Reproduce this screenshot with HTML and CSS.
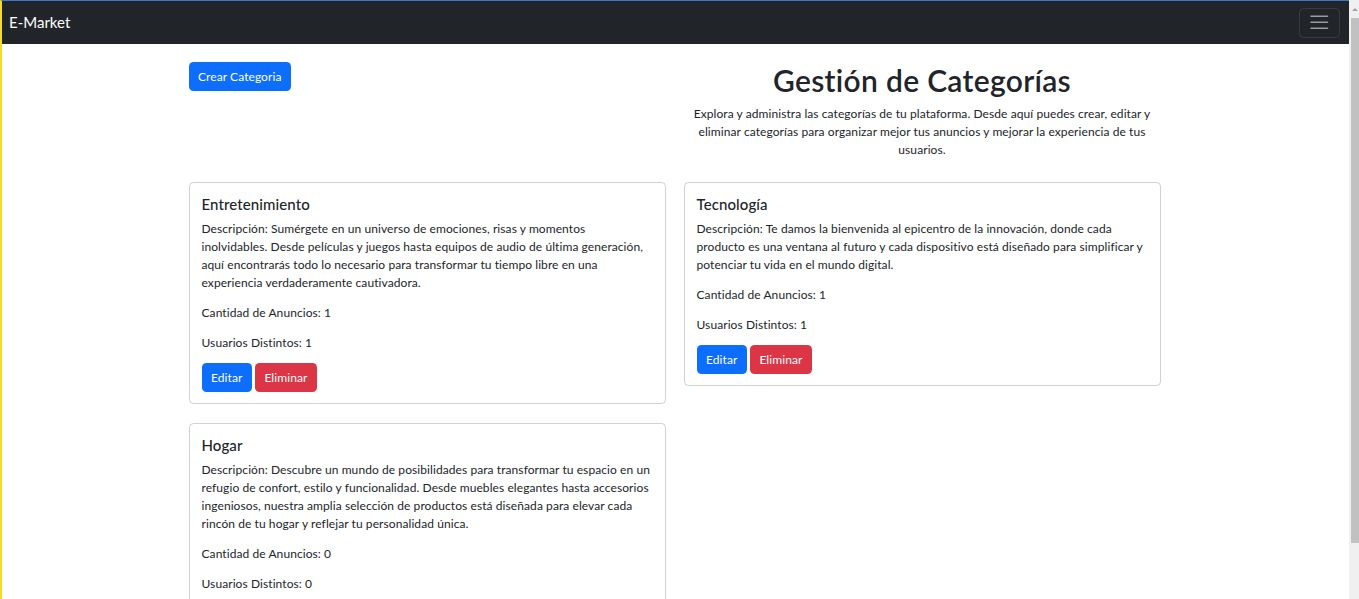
FILE: index.html
```html
<!DOCTYPE html>
<html lang="es">
<head>
<meta charset="utf-8">
<title>E-Market</title>
<link rel="stylesheet" href="styles.css">
</head>
<body>
<div class="window">
  <div class="viewport">
    <nav class="navbar">
      <a class="brand" href="#">E-Market</a>
      <button class="toggler" type="button" aria-label="Toggle navigation">
        <svg class="toggler-icon" viewBox="0 0 30 30" width="22.5" height="22.5"><path d="M4 7h22M4 15h22M4 23h22" stroke="rgba(255,255,255,0.55)" stroke-width="2" stroke-linecap="round" fill="none"/></svg>
      </button>
    </nav>
    <main class="container">
      <div class="top-row">
        <div class="col">
          <a class="btn btn-primary btn-create" href="#">Crear Categoria</a>
        </div>
        <div class="col intro">
          <h1>Gestión de Categorías</h1>
          <p>Explora y administra las categorías de tu plataforma. Desde aquí puedes crear, editar y eliminar categorías para organizar mejor tus anuncios y mejorar la experiencia de tus usuarios.</p>
        </div>
      </div>
      <div class="card-grid">
        <div class="card">
          <h5 class="card-title">Entretenimiento</h5>
          <p class="card-text">Descripción: Sumérgete en un universo de emociones, risas y momentos inolvidables. Desde películas y juegos hasta equipos de audio de última generación, aquí encontrarás todo lo necesario para transformar tu tiempo libre en una experiencia verdaderamente cautivadora.</p>
          <p class="card-text">Cantidad de Anuncios: 1</p>
          <p class="card-text">Usuarios Distintos: 1</p>
          <div class="actions">
            <a class="btn btn-primary" href="#">Editar</a>
            <a class="btn btn-danger" href="#">Eliminar</a>
          </div>
        </div>
        <div class="card">
          <h5 class="card-title">Tecnología</h5>
          <p class="card-text">Descripción: Te damos la bienvenida al epicentro de la innovación, donde cada producto es una ventana al futuro y cada dispositivo está diseñado para simplificar y potenciar tu vida en el mundo digital.</p>
          <p class="card-text">Cantidad de Anuncios: 1</p>
          <p class="card-text">Usuarios Distintos: 1</p>
          <div class="actions">
            <a class="btn btn-primary" href="#">Editar</a>
            <a class="btn btn-danger" href="#">Eliminar</a>
          </div>
        </div>
        <div class="card">
          <h5 class="card-title">Hogar</h5>
          <p class="card-text">Descripción: Descubre un mundo de posibilidades para transformar tu espacio en un refugio de confort, estilo y funcionalidad. Desde muebles elegantes hasta accesorios ingeniosos, nuestra amplia selección de productos está diseñada para elevar cada rincón de tu hogar y reflejar tu personalidad única.</p>
          <p class="card-text">Cantidad de Anuncios: 0</p>
          <p class="card-text">Usuarios Distintos: 0</p>
          <div class="actions">
            <a class="btn btn-primary" href="#">Editar</a>
            <a class="btn btn-danger" href="#">Eliminar</a>
          </div>
        </div>
      </div>
    </main>
  </div>
  <div class="scrollbar">
    <div class="sb-up"><span class="sb-arrow"></span></div>
    <div class="sb-thumb"></div>
    <div class="sb-rest"></div>
  </div>
</div>
</body>
</html>
```

FILE: styles.css
```css
* { box-sizing: border-box; }

html, body {
  margin: 0;
  height: 100%;
  overflow: hidden;
}

body {
  font-family: "Lato", "Noto Sans", sans-serif;
  font-size: 12px;
  line-height: 18px;
  letter-spacing: 0.08px;
  color: #212529;
  background: #fff;
}

.window {
  position: relative;
  display: flex;
  height: 100vh;
}

/* window frame lines drawn over the page */
.window::after {
  content: "";
  position: absolute;
  inset: 0 10px 0 0;
  border-top: 1px solid #3b78c6;
  border-left: 2px solid #f3dc2e;
  pointer-events: none;
}

.viewport {
  flex: 1;
  overflow: hidden;
}

/* Navbar */
.navbar {
  background: #212529;
  display: flex;
  align-items: center;
  justify-content: space-between;
  padding: 6px 9px;
  height: 44px;
}

.brand {
  color: #fff;
  text-decoration: none;
  font-size: 15px;
  line-height: 22px;
  letter-spacing: 0;
  padding: 4px 0;
}

.toggler {
  display: flex;
  align-items: center;
  justify-content: center;
  width: 41px;
  height: 30px;
  padding: 0;
  background: transparent;
  border: 1px solid rgba(255, 255, 255, 0.1);
  border-radius: 4.5px;
  margin-top: 1px;
}

.toggler-icon { display: block; }

/* Main */
.container {
  max-width: 990px;
  margin: 0 auto;
  padding: 18px 9px 0;
}

.top-row {
  display: grid;
  grid-template-columns: 1fr 1fr;
  column-gap: 18px;
  align-items: start;
}

.intro { text-align: center; }

h1 {
  font-size: 30px;
  font-weight: 600;
  line-height: 36px;
  letter-spacing: 0.3px;
  margin: 0 0 7px;
}

.intro p {
  margin: 0 0 12px;
}

.btn {
  display: inline-block;
  font-size: 12px;
  line-height: 18px;
  padding: 6px 9.5px 5px;
  border-radius: 4.5px;
  color: #fff;
  text-decoration: none;
  border: 0;
}

.btn-primary { background: #0d6efd; }
.btn-danger { background: #dc3545; }

/* Cards */
.card-grid {
  display: grid;
  grid-template-columns: 1fr 1fr;
  column-gap: 18px;
  row-gap: 19px;
  align-items: start;
  margin-top: 11px;
}

.card {
  border: 1px solid rgba(0, 0, 0, 0.175);
  border-radius: 4.5px;
  padding: 12px 12px 11px;
}

.card-title {
  font-size: 15px;
  font-weight: 500;
  line-height: 18px;
  letter-spacing: 0.1px;
  margin: 0 0 7px;
}

.card-text {
  margin: 0 0 12px;
}

.card-text:last-of-type { margin-bottom: 11px; }

.actions {
  display: flex;
  gap: 3px;
}

/* Scrollbar */
.scrollbar {
  width: 10px;
  display: flex;
  flex-direction: column;
  background: #f0f0f0;
  padding-left: 2px;
}

.sb-up {
  height: 18px;
  display: flex;
  justify-content: center;
  align-items: center;
}

.sb-arrow {
  width: 0;
  height: 0;
  border-left: 3px solid transparent;
  border-right: 3px solid transparent;
  border-bottom: 3px solid #a3a3a3;
}

.sb-thumb {
  height: 525px;
  background: #c1c1c1;
}

.sb-rest { flex: 1; }
```
